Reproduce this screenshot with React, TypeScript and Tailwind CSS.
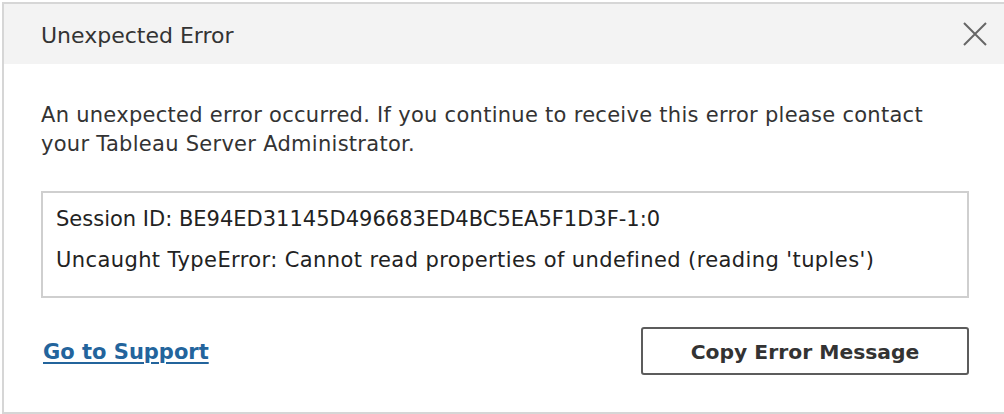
import React from 'react';

const font = { fontFamily: '"DejaVu Sans", "Liberation Sans", Arial, sans-serif' };

const CloseIcon: React.FC = () => (
  <svg width="24" height="24" viewBox="0 0 24 24" className="text-[#666666]">
    <path d="M1 1 L23 23 M23 1 L1 23" stroke="currentColor" strokeWidth="2" fill="none" />
  </svg>
);

export default function App() {
  return (
    <div className="w-[1004px] h-[414px] bg-white pl-[2px] pt-[2px] overflow-hidden" style={font}>
      <div className="h-[412px] flex flex-col border-l-2 border-t-2 border-b-2 border-[#d6d6d6] bg-white">
        {/* Header */}
        <div className="h-[60px] shrink-0 bg-[#f3f3f3] flex items-center justify-between pl-[37px] pr-[17px]">
          <h1 className="text-[22px] text-[#333333] leading-none pt-[3px]">Unexpected Error</h1>
          <button className="p-0">
            <CloseIcon />
          </button>
        </div>

        {/* Body */}
        <div className="flex-1 flex flex-col pl-[37px] pr-[35px]">
          <p className="mt-[37px] w-[910px] text-[21px] leading-[29px] tracking-[0.28px] text-[#333333]">
            An unexpected error occurred. If you continue to receive this error please contact your Tableau Server Administrator.
          </p>

          <div className="mt-[32px] h-[107px] border-2 border-[#cfcfcf] px-[13px] pt-[11px] text-[21px] text-[#222222]">
            <div className="leading-[30px]">Session ID: BE94ED31145D496683ED4BC5EA5F1D3F-1:0</div>
            <div className="mt-[11px] leading-[30px] tracking-[0.4px]">
              Uncaught TypeError: Cannot read properties of undefined (reading 'tuples')
            </div>
          </div>

          <div className="mt-[29px] flex items-center justify-between">
            <a href="#" className="ml-[2px] pt-[3px] text-[21px] font-bold text-[#23649c] underline underline-offset-[3px] decoration-2">
              Go to Support
            </a>
            <button className="w-[328px] h-[48px] pt-[3px] border-2 border-[#5c5c5c] rounded-[3px] bg-white text-[20.3px] font-bold text-[#333333]">
              Copy Error Message
            </button>
          </div>
        </div>
      </div>
    </div>
  );
}
